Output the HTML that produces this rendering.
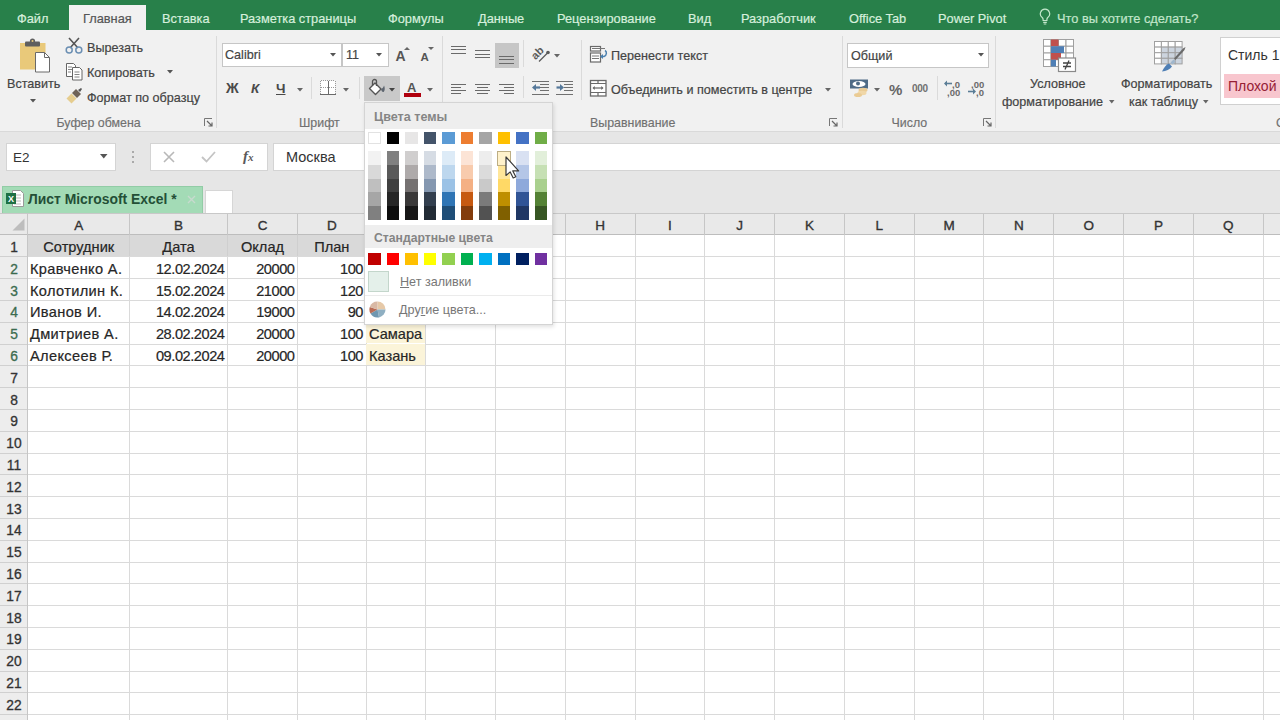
<!DOCTYPE html><html><head><meta charset="utf-8"><style>
*{margin:0;padding:0;box-sizing:border-box}
html,body{width:1280px;height:720px;overflow:hidden;background:#fff;font-family:"Liberation Sans", sans-serif;}
.a{position:absolute}
.t{position:absolute;white-space:nowrap;line-height:1}
.tab{font-size:12.8px;-webkit-text-stroke:0.2px currentColor}
.rb{color:#444444;font-size:12.6px;-webkit-text-stroke:0.2px #444444}
.gl{color:#707070;font-size:12.4px;-webkit-text-stroke:0.15px #707070}
.cell{color:#262626;font-size:14.6px;-webkit-text-stroke:0.2px #262626}
.rh{color:#333;font-size:13.8px;text-align:center;width:28px;left:0;-webkit-text-stroke:0.3px}
.ch{color:#333;font-size:13.5px;text-align:center;-webkit-text-stroke:0.35px #333}
</style></head><body>
<div class="a" style="left:0;top:0;width:1280px;height:30px;background:#28804A"></div>
<div class="a" style="left:69px;top:5px;width:77px;height:26px;background:#F1F1F1"></div>
<div class="t tab" style="left:17px;top:13px;color:#D6EFDC">Файл</div>
<div class="t tab" style="left:83px;top:13px;color:#555">Главная</div>
<div class="t tab" style="left:162px;top:13px;color:#D6EFDC">Вставка</div>
<div class="t tab" style="left:240px;top:13px;color:#D6EFDC">Разметка страницы</div>
<div class="t tab" style="left:388px;top:13px;color:#D6EFDC">Формулы</div>
<div class="t tab" style="left:478px;top:13px;color:#D6EFDC">Данные</div>
<div class="t tab" style="left:557px;top:13px;color:#D6EFDC">Рецензирование</div>
<div class="t tab" style="left:688px;top:13px;color:#D6EFDC">Вид</div>
<div class="t tab" style="left:741px;top:13px;color:#D6EFDC">Разработчик</div>
<div class="t tab" style="left:849px;top:13px;color:#D6EFDC">Office Tab</div>
<div class="t tab" style="left:938px;top:13px;color:#D6EFDC">Power Pivot</div>
<div class="t tab" style="left:1057px;top:13px;color:#C2E6CB">Что вы хотите сделать?</div>
<svg class="a" style="left:1039px;top:8px" width="12" height="17" viewBox="0 0 12 17"><path d="M6 1.2a4.6 4.6 0 0 0-2.8 8.3c.6.5.9 1.2.9 2v1h3.8v-1c0-.8.3-1.5.9-2A4.6 4.6 0 0 0 6 1.2z" fill="none" stroke="#C2E6CB" stroke-width="1.2"/><path d="M4.2 14.3h3.6M4.7 16h2.6" stroke="#C2E6CB" stroke-width="1.2"/></svg>
<div class="a" style="left:0;top:131px;width:1280px;height:82px;background:#E6E6E6"></div>
<div class="a" style="left:0;top:30px;width:1280px;height:101px;background:#F1F1F1"></div>
<div class="a" style="left:0;top:131px;width:1280px;height:1px;background:#D9D9D9"></div>
<div class="a" style="left:581px;top:40px;width:1px;height:60px;background:#DADADA"></div>
<div class="a" style="left:216px;top:36px;width:1px;height:92px;background:#DADADA"></div>
<div class="a" style="left:442px;top:36px;width:1px;height:92px;background:#DADADA"></div>
<div class="a" style="left:842px;top:36px;width:1px;height:92px;background:#DADADA"></div>
<div class="a" style="left:995px;top:36px;width:1px;height:92px;background:#DADADA"></div>
<svg class="a" style="left:18px;top:38px" width="34" height="35" viewBox="0 0 34 35"><rect x="2" y="5" width="25.5" height="26.5" fill="#E9C97A"/><rect x="7" y="3.5" width="15" height="5" rx="1" fill="#5F5F5F"/><circle cx="14.5" cy="3" r="2.6" fill="#5F5F5F"/><circle cx="14.5" cy="3" r="1" fill="#E9C97A"/><path d="M17.5 14.5h9l5 5v14.5h-14z" fill="#fff" stroke="#6A6A6A" stroke-width="1"/><path d="M26.5 14.5v5h5" fill="none" stroke="#6A6A6A" stroke-width="1"/></svg>
<div class="t rb" style="left:7px;top:78px">Вставить</div>
<svg class="a" style="left:30px;top:99px" width="7" height="4"><path d="M0 0h6l-3 3.5z" fill="#555"/></svg>
<svg class="a" style="left:65px;top:37px" width="18" height="17" viewBox="0 0 18 17"><path d="M4 1l9 10M14 1L5 11" stroke="#555" stroke-width="1.6"/><circle cx="4.2" cy="13" r="3" fill="none" stroke="#6B8FB3" stroke-width="1.5"/><circle cx="13.8" cy="13" r="3" fill="none" stroke="#6B8FB3" stroke-width="1.5"/></svg>
<div class="t rb" style="left:87px;top:42px">Вырезать</div>
<svg class="a" style="left:65px;top:62px" width="18" height="19" viewBox="0 0 18 19"><path d="M1.5 1.5h7l2 2v11h-9z" fill="#fff" stroke="#666" stroke-width="1"/><path d="M7.5 5.5h7l2.5 2.5v10h-9.5z" fill="#fff" stroke="#666" stroke-width="1"/><path d="M3 5h4M3 7.5h4M3 10h3M9.5 10h5M9.5 12.5h5M9.5 15h5" stroke="#777" stroke-width="0.9"/></svg>
<div class="t rb" style="left:87px;top:67px">Копировать</div>
<svg class="a" style="left:167px;top:70px" width="7" height="4"><path d="M0 0h6l-3 3.5z" fill="#555"/></svg>
<svg class="a" style="left:65px;top:87px" width="18" height="18" viewBox="0 0 18 18"><path d="M1.5 11.5l5-5 5 5-5 5z" fill="#E6CD8F"/><path d="M7 6l4-4 5 5-4 4z" fill="#6E6257"/><path d="M13 3l3-2 1 1-2 3z" fill="#555"/></svg>
<div class="t rb" style="left:87px;top:92px">Формат по образцу</div>
<div class="t gl" style="left:56.5px;top:117px">Буфер обмена</div>
<svg class="a" style="left:204px;top:118px" width="9" height="9" viewBox="0 0 9 9"><path d="M0.5 8V0.5H8" fill="none" stroke="#777" stroke-width="1"/><path d="M3 3l5 5M8 4.5V8H4.5" fill="none" stroke="#666" stroke-width="1.2"/></svg>
<div class="a" style="left:222px;top:43px;width:120px;height:24px;background:#fff;border:1px solid #C6C6C6"></div>
<div class="t rb" style="left:225px;top:49px;color:#444">Calibri</div>
<svg class="a" style="left:330px;top:53px" width="7" height="4"><path d="M0 0h6l-3 3.5z" fill="#555"/></svg>
<div class="a" style="left:342px;top:43px;width:47px;height:24px;background:#fff;border:1px solid #C6C6C6"></div>
<div class="t rb" style="left:346px;top:49px;color:#444">11</div>
<svg class="a" style="left:376px;top:53px" width="7" height="4"><path d="M0 0h6l-3 3.5z" fill="#555"/></svg>
<div class="t" style="left:395.5px;top:49px;font-size:14px;font-weight:bold;color:#555">A</div>
<svg class="a" style="left:404px;top:47px" width="6" height="3"><path d="M0 3h6L3 0z" fill="#666"/></svg>
<div class="t" style="left:420.5px;top:51.5px;font-size:11.5px;font-weight:bold;color:#555">A</div>
<svg class="a" style="left:428px;top:47px" width="6" height="3"><path d="M0 0h6L3 3z" fill="#666"/></svg>
<div class="t" style="left:226px;top:81px;font-size:14px;font-weight:bold;color:#4A4A4A">Ж</div>
<div class="t" style="left:251px;top:82px;font-size:13.5px;font-weight:bold;font-style:italic;color:#4A4A4A">К</div>
<div class="t" style="left:276px;top:82px;font-size:13.5px;font-weight:bold;color:#4A4A4A;text-decoration:underline">Ч</div>
<svg class="a" style="left:297px;top:88px" width="7" height="4"><path d="M0 0h6l-3 3.5z" fill="#666"/></svg>
<div class="a" style="left:311px;top:77px;width:1px;height:22px;background:#DADADA"></div>
<svg class="a" style="left:320px;top:80px" width="16" height="16" viewBox="0 0 16 16" shape-rendering="crispEdges"><rect x="1" y="1" width="14" height="13" fill="#fff"/><path d="M0.5 1v13M15.5 1v13M1 0.5h14M1 7.5h14" stroke="#9A9A9A" stroke-width="1" stroke-dasharray="1 1" fill="none"/><path d="M0 14.5h16M8 1v13" stroke="#6A6A6A" stroke-width="1"/></svg>
<svg class="a" style="left:343px;top:88px" width="7" height="4"><path d="M0 0h6l-3 3.5z" fill="#666"/></svg>
<div class="a" style="left:359px;top:77px;width:1px;height:22px;background:#DADADA"></div>
<div class="a" style="left:364px;top:76px;width:36px;height:25px;background:#C9C9C9"></div>
<svg class="a" style="left:367px;top:78px" width="20" height="18" viewBox="0 0 20 18"><path d="M2.5 10.5L8 5l6 6-5.5 5.5z" fill="#fff" stroke="#555" stroke-width="1.4" stroke-linejoin="round"/><path d="M5.5 7.5V3.5a2 2 0 0 1 4 0V8" fill="none" stroke="#555" stroke-width="1.3"/><path d="M14 11c1.5-.5 2.5-1.5 3-3.5 1 2 1 4.5 0 6-1 1.5-2.5 0-3-2.5z" fill="#5E6670"/></svg>
<svg class="a" style="left:389px;top:88px" width="7" height="4"><path d="M0 0h6l-3 3.5z" fill="#444"/></svg>
<div class="t" style="left:407px;top:81px;font-size:13px;font-weight:bold;color:#555">A</div>
<div class="a" style="left:404px;top:93px;width:17px;height:4px;background:#B0000E"></div>
<svg class="a" style="left:427px;top:88px" width="7" height="4"><path d="M0 0h6l-3 3.5z" fill="#666"/></svg>
<div class="t gl" style="left:299px;top:117px">Шрифт</div>
<svg class="a" style="left:430px;top:118px" width="9" height="9" viewBox="0 0 9 9"><path d="M0.5 8V0.5H8" fill="none" stroke="#777" stroke-width="1"/><path d="M3 3l5 5M8 4.5V8H4.5" fill="none" stroke="#666" stroke-width="1.2"/></svg>
<svg class="a" style="left:451px;top:46px" width="16" height="14" shape-rendering="crispEdges"><g fill="#6A6A6A"><rect x="0" y="0" width="15" height="1"/><rect x="0" y="3" width="15" height="1"/><rect x="0" y="7" width="15" height="1"/></g></svg>
<svg class="a" style="left:475px;top:50px" width="16" height="14" shape-rendering="crispEdges"><g fill="#6A6A6A"><rect x="0" y="0" width="15" height="1"/><rect x="0" y="4" width="15" height="1"/><rect x="0" y="7" width="15" height="1"/></g></svg>
<div class="a" style="left:495px;top:43px;width:24px;height:25px;background:#C6C6C6"></div>
<svg class="a" style="left:499px;top:56px" width="16" height="14" shape-rendering="crispEdges"><g fill="#6A6A6A"><rect x="0" y="0" width="15" height="1"/><rect x="0" y="3" width="15" height="1"/><rect x="0" y="7" width="15" height="1"/></g></svg>
<svg class="a" style="left:451px;top:84px" width="16" height="14" shape-rendering="crispEdges"><g fill="#6A6A6A"><rect x="0" y="0" width="15" height="1"/><rect x="0" y="3" width="10" height="1"/><rect x="0" y="6" width="15" height="1"/><rect x="0" y="9" width="10" height="1"/></g></svg>
<svg class="a" style="left:475px;top:84px" width="16" height="14" shape-rendering="crispEdges"><g fill="#6A6A6A"><rect x="0" y="0" width="15" height="1"/><rect x="2" y="3" width="11" height="1"/><rect x="0" y="6" width="15" height="1"/><rect x="2" y="9" width="11" height="1"/></g></svg>
<svg class="a" style="left:499px;top:84px" width="16" height="14" shape-rendering="crispEdges"><g fill="#6A6A6A"><rect x="0" y="0" width="15" height="1"/><rect x="5" y="3" width="10" height="1"/><rect x="0" y="6" width="15" height="1"/><rect x="5" y="9" width="10" height="1"/></g></svg>
<div class="a" style="left:523px;top:40px;width:1px;height:27px;background:#DADADA"></div>
<div class="a" style="left:523px;top:76px;width:1px;height:22px;background:#DADADA"></div>
<svg class="a" style="left:530px;top:43px" width="22" height="21" viewBox="0 0 22 21"><g transform="rotate(-45 8 9)"><text x="0.5" y="13" font-family="Liberation Sans" font-size="11" font-weight="bold" fill="#5A5A5A">ab</text></g><path d="M9 18.5L17.5 10" stroke="#5A5A5A" stroke-width="1.3"/><circle cx="18" cy="9.5" r="1.8" fill="#5A5A5A"/></svg>
<svg class="a" style="left:554px;top:54px" width="7" height="4"><path d="M0 0h6l-3 3.5z" fill="#666"/></svg>
<svg class="a" style="left:532px;top:80px" width="18" height="16" viewBox="0 0 18 16" shape-rendering="crispEdges"><g fill="#707070"><rect x="0" y="1" width="17" height="1"/><rect x="8" y="4" width="9" height="1"/><rect x="8" y="7" width="9" height="1"/><rect x="8" y="10" width="9" height="1"/><rect x="0" y="14" width="17" height="1"/></g></svg>
<svg class="a" style="left:532px;top:80px" width="9" height="16" viewBox="0 0 9 16"><path d="M3 7.5h5" stroke="#55789A" stroke-width="2.2"/><path d="M0 7.5l4-3.5v7z" fill="#55789A"/></svg>
<svg class="a" style="left:556px;top:80px" width="18" height="16" viewBox="0 0 18 16" shape-rendering="crispEdges"><g fill="#707070"><rect x="0" y="1" width="17" height="1"/><rect x="8" y="4" width="9" height="1"/><rect x="8" y="7" width="9" height="1"/><rect x="8" y="10" width="9" height="1"/><rect x="0" y="14" width="17" height="1"/></g></svg>
<svg class="a" style="left:556px;top:80px" width="9" height="16" viewBox="0 0 9 16"><path d="M0.5 7.5h4.5" stroke="#55789A" stroke-width="2.2"/><path d="M8 7.5l-4-3.5v7z" fill="#55789A"/></svg>
<svg class="a" style="left:589px;top:45px" width="20" height="19" viewBox="0 0 20 19"><rect x="1.5" y="1.5" width="10" height="4.5" fill="#fff" stroke="#6A6A6A" stroke-width="1.2"/><path d="M3 3.5h13" stroke="#777" stroke-width="1"/><rect x="1.5" y="8" width="10" height="9" fill="#fff" stroke="#6A6A6A" stroke-width="1.2"/><path d="M3 11h7M3 13.5h7" stroke="#777" stroke-width="1"/><path d="M16 5.5c2 1 2 5-1 6h-3" fill="none" stroke="#4A7FAE" stroke-width="1.5"/><path d="M11 11.5l3-2.5v5z" fill="#4A7FAE"/></svg>
<div class="t rb" style="left:611px;top:50px">Перенести текст</div>
<svg class="a" style="left:589px;top:79px" width="18" height="18" viewBox="0 0 18 18"><rect x="1.5" y="1.5" width="15.5" height="15.5" fill="#fff" stroke="#6A6A6A" stroke-width="1.3"/><path d="M1.5 4.5h15.5M1.5 13.5h15.5M9 1.5v3M9 13.5v3.5" stroke="#6A6A6A" stroke-width="1.2"/><path d="M4.5 9h9" stroke="#666" stroke-width="1.2"/><path d="M3.5 9l2.2-2v4zM14.5 9l-2.2-2v4z" fill="#666"/></svg>
<div class="t rb" style="left:611px;top:84px">Объединить и поместить в центре</div>
<svg class="a" style="left:825px;top:88px" width="7" height="4"><path d="M0 0h6l-3 3.5z" fill="#666"/></svg>
<div class="t gl" style="left:590px;top:117px">Выравнивание</div>
<svg class="a" style="left:829px;top:118px" width="9" height="9" viewBox="0 0 9 9"><path d="M0.5 8V0.5H8" fill="none" stroke="#777" stroke-width="1"/><path d="M3 3l5 5M8 4.5V8H4.5" fill="none" stroke="#666" stroke-width="1.2"/></svg>
<div class="a" style="left:847px;top:43px;width:142px;height:25px;background:#fff;border:1px solid #C6C6C6"></div>
<div class="t rb" style="left:851px;top:50px">Общий</div>
<svg class="a" style="left:978px;top:53px" width="7" height="4"><path d="M0 0h6l-3 3.5z" fill="#555"/></svg>
<svg class="a" style="left:850px;top:79px" width="20" height="19" viewBox="0 0 20 19"><rect x="0" y="0.5" width="18" height="9" fill="#4F6B86"/><ellipse cx="9" cy="5" rx="6.5" ry="3" fill="#fff"/><circle cx="8" cy="4.5" r="2" fill="#4F6B86"/><ellipse cx="13" cy="11" rx="4.5" ry="2.2" fill="#EACB94"/><ellipse cx="12" cy="14" rx="4.5" ry="2.2" fill="#F0D7A8"/><ellipse cx="8" cy="16" rx="4" ry="2" fill="#EACB94"/></svg>
<svg class="a" style="left:874px;top:88px" width="7" height="4"><path d="M0 0h6l-3 3.5z" fill="#666"/></svg>
<div class="t" style="left:889px;top:82px;font-size:15px;font-weight:bold;color:#666">%</div>
<div class="t" style="left:912px;top:84px;font-size:10px;font-weight:bold;color:#707070;letter-spacing:-0.3px">000</div>
<div class="a" style="left:937px;top:76px;width:1px;height:24px;background:#DADADA"></div>
<div class="t" style="left:952px;top:80px;font-size:9.5px;font-weight:bold;color:#6A6A6A">,0</div>
<div class="t" style="left:947px;top:88px;font-size:9.5px;font-weight:bold;color:#6A6A6A">,00</div>
<svg class="a" style="left:944px;top:80px" width="8" height="7"><path d="M1 3.5h7" stroke="#5A7D96" stroke-width="1.6"/><path d="M0 3.5l3-3v6z" fill="#5A7D96"/></svg>
<div class="t" style="left:971px;top:80px;font-size:9.5px;font-weight:bold;color:#6A6A6A">,00</div>
<div class="t" style="left:976px;top:88px;font-size:9.5px;font-weight:bold;color:#6A6A6A">,0</div>
<svg class="a" style="left:968px;top:88px" width="8" height="7"><path d="M0 3.5h6" stroke="#5A7D96" stroke-width="1.6"/><path d="M8 3.5l-3-3v6z" fill="#5A7D96"/></svg>
<div class="t gl" style="left:891.5px;top:117px">Число</div>
<svg class="a" style="left:983px;top:118px" width="9" height="9" viewBox="0 0 9 9"><path d="M0.5 8V0.5H8" fill="none" stroke="#777" stroke-width="1"/><path d="M3 3l5 5M8 4.5V8H4.5" fill="none" stroke="#666" stroke-width="1.2"/></svg>
<svg class="a" style="left:1042px;top:38px" width="36" height="36" viewBox="0 0 36 36"><g fill="#fff" stroke="#A0A0A0" stroke-width="1"><rect x="1.5" y="1.5" width="7.5" height="6.75"/><rect x="9.0" y="1.5" width="7.5" height="6.75"/><rect x="16.5" y="1.5" width="7.5" height="6.75"/><rect x="24.0" y="1.5" width="7.5" height="6.75"/><rect x="1.5" y="8.25" width="7.5" height="6.75"/><rect x="9.0" y="8.25" width="7.5" height="6.75"/><rect x="16.5" y="8.25" width="7.5" height="6.75"/><rect x="24.0" y="8.25" width="7.5" height="6.75"/><rect x="1.5" y="15.0" width="7.5" height="6.75"/><rect x="9.0" y="15.0" width="7.5" height="6.75"/><rect x="16.5" y="15.0" width="7.5" height="6.75"/><rect x="24.0" y="15.0" width="7.5" height="6.75"/><rect x="1.5" y="21.75" width="7.5" height="6.75"/><rect x="9.0" y="21.75" width="7.5" height="6.75"/><rect x="16.5" y="21.75" width="7.5" height="6.75"/><rect x="24.0" y="21.75" width="7.5" height="6.75"/></g><rect x="9" y="1.5" width="7.5" height="6.75" fill="#C0504D"/><rect x="9" y="8.25" width="13" height="6.75" fill="#4F7FB5"/><rect x="9" y="15" width="10" height="6.75" fill="#C0504D"/><rect x="9" y="21.75" width="5" height="6.75" fill="#4F7FB5"/><rect x="16.5" y="20" width="17" height="13.5" fill="#fff" stroke="#8A8A8A" stroke-width="1.2"/><path d="M21 25h8M21 28.5h8M27 22.5l-4 9" stroke="#444" stroke-width="1.3"/></svg>
<div class="t rb" style="left:1030px;top:78px">Условное</div>
<div class="t rb" style="left:1002px;top:96px">форматирование</div>
<svg class="a" style="left:1109px;top:100px" width="6" height="4"><path d="M0 0h5.5l-2.75 3.5z" fill="#666"/></svg>
<svg class="a" style="left:1153px;top:40px" width="36" height="34" viewBox="0 0 36 34"><g fill="#fff" stroke="#A0A0A0" stroke-width="1"><rect x="1.5" y="1.5" width="6.9" height="5.6" fill="#fff"/><rect x="8.4" y="1.5" width="6.9" height="5.6" fill="#fff"/><rect x="15.3" y="1.5" width="6.9" height="5.6" fill="#fff"/><rect x="22.200000000000003" y="1.5" width="6.9" height="5.6" fill="#fff"/><rect x="1.5" y="7.1" width="6.9" height="5.6" fill="#fff"/><rect x="8.4" y="7.1" width="6.9" height="5.6" fill="#CCD4DE"/><rect x="15.3" y="7.1" width="6.9" height="5.6" fill="#CCD4DE"/><rect x="22.200000000000003" y="7.1" width="6.9" height="5.6" fill="#CCD4DE"/><rect x="1.5" y="12.7" width="6.9" height="5.6" fill="#fff"/><rect x="8.4" y="12.7" width="6.9" height="5.6" fill="#CCD4DE"/><rect x="15.3" y="12.7" width="6.9" height="5.6" fill="#CCD4DE"/><rect x="22.200000000000003" y="12.7" width="6.9" height="5.6" fill="#CCD4DE"/><rect x="1.5" y="18.299999999999997" width="6.9" height="5.6" fill="#fff"/><rect x="8.4" y="18.299999999999997" width="6.9" height="5.6" fill="#CCD4DE"/><rect x="15.3" y="18.299999999999997" width="6.9" height="5.6" fill="#CCD4DE"/><rect x="22.200000000000003" y="18.299999999999997" width="6.9" height="5.6" fill="#CCD4DE"/></g><path d="M9 31.5c2-4 4-7 7-8l3 3c-2 3-6 4.5-10 5z" fill="#4F7FB5"/><path d="M17.5 22.5l2 2 3-3-2-2z" fill="#9FB6CC"/><path d="M21 18.5l9-10 2.5-1.5-1 3-9 10z" fill="#6A6A6A"/></svg>
<div class="t rb" style="left:1121px;top:78px">Форматировать</div>
<div class="t rb" style="left:1129px;top:96px">как таблицу</div>
<svg class="a" style="left:1203px;top:100px" width="6" height="4"><path d="M0 0h5.5l-2.75 3.5z" fill="#666"/></svg>
<div class="a" style="left:1220px;top:37px;width:70px;height:68px;background:#fff;border:1px solid #D0D0D0"></div>
<div class="t" style="left:1228px;top:48px;font-size:14px;color:#333">Стиль 1</div>
<div class="a" style="left:1224px;top:74px;width:60px;height:24px;background:#F8C6CE"></div>
<div class="t" style="left:1228px;top:79px;font-size:14px;color:#962035">Плохой</div>
<div class="t gl" style="left:1276px;top:117px">Стили</div>
<div class="a" style="left:6px;top:143px;width:110px;height:28px;background:#fff;border:1px solid #D4D4D4"></div>
<div class="t" style="left:13px;top:151px;font-size:13.5px;color:#333">E2</div>
<svg class="a" style="left:100px;top:154px" width="8" height="5"><path d="M0 0h7.5l-3.75 4.5z" fill="#555"/></svg>
<div class="a" style="left:132px;top:151px;width:2px;height:2px;background:#AAA"></div>
<div class="a" style="left:132px;top:156px;width:2px;height:2px;background:#AAA"></div>
<div class="a" style="left:132px;top:161px;width:2px;height:2px;background:#AAA"></div>
<div class="a" style="left:150px;top:143px;width:118px;height:28px;background:#fff;border:1px solid #D4D4D4"></div>
<svg class="a" style="left:163px;top:151px" width="12" height="12"><path d="M1 1l10 10M11 1L1 11" stroke="#B8B8B8" stroke-width="1.6"/></svg>
<svg class="a" style="left:201px;top:151px" width="15" height="12"><path d="M1 6l4.5 4.5L14 1" fill="none" stroke="#C4C4C4" stroke-width="1.8"/></svg>
<div class="t" style="left:243px;top:149px;font-size:15px;font-style:italic;font-weight:bold;font-family:'Liberation Serif';color:#5A5A5A">f<span style="font-size:11px">x</span></div>
<div class="a" style="left:273px;top:143px;width:1010px;height:28px;background:#fff;border:1px solid #D4D4D4"></div>
<div class="t" style="left:286px;top:150px;font-size:14.5px;color:#333">Москва</div>
<div class="a" style="left:2px;top:186px;width:201px;height:28px;background:#A3DBB6;border:1px solid #92CCA6"></div>
<svg class="a" style="left:6px;top:190px" width="18" height="17" viewBox="0 0 18 17"><path d="M6.5 0.5h8l3 3v13h-11z" fill="#fff" stroke="#999"/><path d="M8 5h7M8 8h7M8 11h7M8 14h7" stroke="#BBB"/><rect x="0" y="3" width="10" height="11" fill="#1E7145"/><text x="2" y="12" font-family="Liberation Sans" font-size="9" font-weight="bold" fill="#fff">X</text></svg>
<div class="t" style="left:28px;top:193px;font-size:13.9px;font-weight:bold;color:#234F36">Лист Microsoft Excel *</div>
<svg class="a" style="left:187px;top:195px" width="9" height="9"><path d="M1 1l7 7M8 1L1 8" stroke="#C7DACE" stroke-width="1.4"/></svg>
<div class="a" style="left:205px;top:190px;width:28px;height:24px;background:#fff;border:1px solid #D6D6D6;border-bottom:none"></div>
<div class="a" style="left:0;top:213px;width:1280px;height:22px;background:#E9E9E9"></div>
<div class="a" style="left:0;top:213px;width:1280px;height:1px;background:#C8C8C8"></div>
<div class="a" style="left:0;top:234px;width:1280px;height:1px;background:#BDBDBD"></div>
<svg class="a" style="left:12px;top:218px" width="13" height="13"><path d="M12.5 0.5v12h-12z" fill="#BDBDBD"/></svg>
<div class="a" style="left:129px;top:214px;width:1px;height:21px;background:#C6C6C6"></div>
<div class="t ch" style="left:28px;width:101.5px;top:218.5px">A</div>
<div class="a" style="left:227px;top:214px;width:1px;height:21px;background:#C6C6C6"></div>
<div class="t ch" style="left:129.5px;width:98.0px;top:218.5px">B</div>
<div class="a" style="left:297px;top:214px;width:1px;height:21px;background:#C6C6C6"></div>
<div class="t ch" style="left:227.5px;width:70.0px;top:218.5px">C</div>
<div class="a" style="left:366px;top:214px;width:1px;height:21px;background:#C6C6C6"></div>
<div class="t ch" style="left:297.5px;width:68.5px;top:218.5px">D</div>
<div class="a" style="left:425px;top:214px;width:1px;height:21px;background:#C6C6C6"></div>
<div class="t ch" style="left:366px;width:59.5px;top:218.5px">E</div>
<div class="a" style="left:495px;top:214px;width:1px;height:21px;background:#C6C6C6"></div>
<div class="t ch" style="left:425.5px;width:70.0px;top:218.5px">F</div>
<div class="a" style="left:565px;top:214px;width:1px;height:21px;background:#C6C6C6"></div>
<div class="t ch" style="left:495.5px;width:69.79999999999995px;top:218.5px">G</div>
<div class="a" style="left:635px;top:214px;width:1px;height:21px;background:#C6C6C6"></div>
<div class="t ch" style="left:565.3px;width:69.70000000000005px;top:218.5px">H</div>
<div class="a" style="left:704px;top:214px;width:1px;height:21px;background:#C6C6C6"></div>
<div class="t ch" style="left:635px;width:69.60000000000002px;top:218.5px">I</div>
<div class="a" style="left:774px;top:214px;width:1px;height:21px;background:#C6C6C6"></div>
<div class="t ch" style="left:704.6px;width:69.89999999999998px;top:218.5px">J</div>
<div class="a" style="left:844px;top:214px;width:1px;height:21px;background:#C6C6C6"></div>
<div class="t ch" style="left:774.5px;width:69.89999999999998px;top:218.5px">K</div>
<div class="a" style="left:914px;top:214px;width:1px;height:21px;background:#C6C6C6"></div>
<div class="t ch" style="left:844.4px;width:69.80000000000007px;top:218.5px">L</div>
<div class="a" style="left:983px;top:214px;width:1px;height:21px;background:#C6C6C6"></div>
<div class="t ch" style="left:914.2px;width:69.69999999999993px;top:218.5px">M</div>
<div class="a" style="left:1053px;top:214px;width:1px;height:21px;background:#C6C6C6"></div>
<div class="t ch" style="left:983.9px;width:69.80000000000007px;top:218.5px">N</div>
<div class="a" style="left:1123px;top:214px;width:1px;height:21px;background:#C6C6C6"></div>
<div class="t ch" style="left:1053.7px;width:69.89999999999986px;top:218.5px">O</div>
<div class="a" style="left:1193px;top:214px;width:1px;height:21px;background:#C6C6C6"></div>
<div class="t ch" style="left:1123.6px;width:69.80000000000018px;top:218.5px">P</div>
<div class="a" style="left:1263px;top:214px;width:1px;height:21px;background:#C6C6C6"></div>
<div class="t ch" style="left:1193.4px;width:69.79999999999995px;top:218.5px">Q</div>
<div class="a" style="left:1333px;top:214px;width:1px;height:21px;background:#C6C6C6"></div>
<div class="t ch" style="left:1263.2px;width:69.79999999999995px;top:218.5px">R</div>
<div class="a" style="left:0;top:235px;width:28px;height:485px;background:#EDEDED"></div>
<div class="a" style="left:27px;top:213px;width:1px;height:507px;background:#C6C6C6"></div>
<div class="a" style="left:0;top:256px;width:27px;height:1px;background:#D0D0D0"></div>
<div class="a" style="left:28px;top:256px;width:1252px;height:1px;background:#DADADA"></div>
<div class="t rh" style="top:241.0px;color:#333">1</div>
<div class="a" style="left:0;top:278px;width:27px;height:1px;background:#D0D0D0"></div>
<div class="a" style="left:28px;top:278px;width:1252px;height:1px;background:#DADADA"></div>
<div class="t rh" style="top:262.8px;color:#3B6B4F">2</div>
<div class="a" style="left:0;top:300px;width:27px;height:1px;background:#D0D0D0"></div>
<div class="a" style="left:28px;top:300px;width:1252px;height:1px;background:#DADADA"></div>
<div class="t rh" style="top:284.6px;color:#3B6B4F">3</div>
<div class="a" style="left:0;top:322px;width:27px;height:1px;background:#D0D0D0"></div>
<div class="a" style="left:28px;top:322px;width:1252px;height:1px;background:#DADADA"></div>
<div class="t rh" style="top:306.4px;color:#3B6B4F">4</div>
<div class="a" style="left:0;top:344px;width:27px;height:1px;background:#D0D0D0"></div>
<div class="a" style="left:28px;top:344px;width:1252px;height:1px;background:#DADADA"></div>
<div class="t rh" style="top:328.2px;color:#3B6B4F">5</div>
<div class="a" style="left:0;top:365px;width:27px;height:1px;background:#D0D0D0"></div>
<div class="a" style="left:28px;top:365px;width:1252px;height:1px;background:#DADADA"></div>
<div class="t rh" style="top:350.0px;color:#3B6B4F">6</div>
<div class="a" style="left:0;top:387px;width:27px;height:1px;background:#D0D0D0"></div>
<div class="a" style="left:28px;top:387px;width:1252px;height:1px;background:#DADADA"></div>
<div class="t rh" style="top:371.8px;color:#333">7</div>
<div class="a" style="left:0;top:409px;width:27px;height:1px;background:#D0D0D0"></div>
<div class="a" style="left:28px;top:409px;width:1252px;height:1px;background:#DADADA"></div>
<div class="t rh" style="top:393.6px;color:#333">8</div>
<div class="a" style="left:0;top:431px;width:27px;height:1px;background:#D0D0D0"></div>
<div class="a" style="left:28px;top:431px;width:1252px;height:1px;background:#DADADA"></div>
<div class="t rh" style="top:415.4px;color:#333">9</div>
<div class="a" style="left:0;top:453px;width:27px;height:1px;background:#D0D0D0"></div>
<div class="a" style="left:28px;top:453px;width:1252px;height:1px;background:#DADADA"></div>
<div class="t rh" style="top:437.20000000000005px;color:#333">10</div>
<div class="a" style="left:0;top:474px;width:27px;height:1px;background:#D0D0D0"></div>
<div class="a" style="left:28px;top:474px;width:1252px;height:1px;background:#DADADA"></div>
<div class="t rh" style="top:459.0px;color:#333">11</div>
<div class="a" style="left:0;top:496px;width:27px;height:1px;background:#D0D0D0"></div>
<div class="a" style="left:28px;top:496px;width:1252px;height:1px;background:#DADADA"></div>
<div class="t rh" style="top:480.8px;color:#333">12</div>
<div class="a" style="left:0;top:518px;width:27px;height:1px;background:#D0D0D0"></div>
<div class="a" style="left:28px;top:518px;width:1252px;height:1px;background:#DADADA"></div>
<div class="t rh" style="top:502.6px;color:#333">13</div>
<div class="a" style="left:0;top:540px;width:27px;height:1px;background:#D0D0D0"></div>
<div class="a" style="left:28px;top:540px;width:1252px;height:1px;background:#DADADA"></div>
<div class="t rh" style="top:524.4000000000001px;color:#333">14</div>
<div class="a" style="left:0;top:562px;width:27px;height:1px;background:#D0D0D0"></div>
<div class="a" style="left:28px;top:562px;width:1252px;height:1px;background:#DADADA"></div>
<div class="t rh" style="top:546.2px;color:#333">15</div>
<div class="a" style="left:0;top:583px;width:27px;height:1px;background:#D0D0D0"></div>
<div class="a" style="left:28px;top:583px;width:1252px;height:1px;background:#DADADA"></div>
<div class="t rh" style="top:568.0px;color:#333">16</div>
<div class="a" style="left:0;top:605px;width:27px;height:1px;background:#D0D0D0"></div>
<div class="a" style="left:28px;top:605px;width:1252px;height:1px;background:#DADADA"></div>
<div class="t rh" style="top:589.8px;color:#333">17</div>
<div class="a" style="left:0;top:627px;width:27px;height:1px;background:#D0D0D0"></div>
<div class="a" style="left:28px;top:627px;width:1252px;height:1px;background:#DADADA"></div>
<div class="t rh" style="top:611.6px;color:#333">18</div>
<div class="a" style="left:0;top:649px;width:27px;height:1px;background:#D0D0D0"></div>
<div class="a" style="left:28px;top:649px;width:1252px;height:1px;background:#DADADA"></div>
<div class="t rh" style="top:633.4000000000001px;color:#333">19</div>
<div class="a" style="left:0;top:671px;width:27px;height:1px;background:#D0D0D0"></div>
<div class="a" style="left:28px;top:671px;width:1252px;height:1px;background:#DADADA"></div>
<div class="t rh" style="top:655.2px;color:#333">20</div>
<div class="a" style="left:0;top:692px;width:27px;height:1px;background:#D0D0D0"></div>
<div class="a" style="left:28px;top:692px;width:1252px;height:1px;background:#DADADA"></div>
<div class="t rh" style="top:677.0px;color:#333">21</div>
<div class="a" style="left:0;top:714px;width:27px;height:1px;background:#D0D0D0"></div>
<div class="a" style="left:28px;top:714px;width:1252px;height:1px;background:#DADADA"></div>
<div class="t rh" style="top:698.8px;color:#333">22</div>
<div class="a" style="left:0;top:736px;width:27px;height:1px;background:#D0D0D0"></div>
<div class="a" style="left:28px;top:736px;width:1252px;height:1px;background:#DADADA"></div>
<div class="t rh" style="top:720.6px;color:#333">23</div>
<div class="a" style="left:129px;top:235px;width:1px;height:485px;background:#DADADA"></div>
<div class="a" style="left:227px;top:235px;width:1px;height:485px;background:#DADADA"></div>
<div class="a" style="left:297px;top:235px;width:1px;height:485px;background:#DADADA"></div>
<div class="a" style="left:366px;top:235px;width:1px;height:485px;background:#DADADA"></div>
<div class="a" style="left:425px;top:235px;width:1px;height:485px;background:#DADADA"></div>
<div class="a" style="left:495px;top:235px;width:1px;height:485px;background:#DADADA"></div>
<div class="a" style="left:565px;top:235px;width:1px;height:485px;background:#DADADA"></div>
<div class="a" style="left:635px;top:235px;width:1px;height:485px;background:#DADADA"></div>
<div class="a" style="left:704px;top:235px;width:1px;height:485px;background:#DADADA"></div>
<div class="a" style="left:774px;top:235px;width:1px;height:485px;background:#DADADA"></div>
<div class="a" style="left:844px;top:235px;width:1px;height:485px;background:#DADADA"></div>
<div class="a" style="left:914px;top:235px;width:1px;height:485px;background:#DADADA"></div>
<div class="a" style="left:983px;top:235px;width:1px;height:485px;background:#DADADA"></div>
<div class="a" style="left:1053px;top:235px;width:1px;height:485px;background:#DADADA"></div>
<div class="a" style="left:1123px;top:235px;width:1px;height:485px;background:#DADADA"></div>
<div class="a" style="left:1193px;top:235px;width:1px;height:485px;background:#DADADA"></div>
<div class="a" style="left:1263px;top:235px;width:1px;height:485px;background:#DADADA"></div>
<div class="a" style="left:1333px;top:235px;width:1px;height:485px;background:#DADADA"></div>
<div class="a" style="left:28px;top:235px;width:337px;height:21px;background:#D9D9D9"></div>
<div class="a" style="left:129px;top:235px;width:1px;height:21px;background:#CFCFCF"></div>
<div class="a" style="left:227px;top:235px;width:1px;height:21px;background:#CFCFCF"></div>
<div class="a" style="left:297px;top:235px;width:1px;height:21px;background:#CFCFCF"></div>
<div class="a" style="left:366px;top:235px;width:1px;height:21px;background:#CFCFCF"></div>
<div class="t cell" style="left:28px;width:101.5px;text-align:center;top:240px">Сотрудник</div>
<div class="t cell" style="left:129.5px;width:98.0px;text-align:center;top:240px">Дата</div>
<div class="t cell" style="left:227.5px;width:70.0px;text-align:center;top:240px">Оклад</div>
<div class="t cell" style="left:297.5px;width:68.5px;text-align:center;top:240px">План</div>
<div class="a" style="left:366px;top:322px;width:59px;height:21px;background:#FBF4D9"></div>
<div class="a" style="left:366px;top:344px;width:59px;height:21px;background:#FBF4D9"></div>
<div class="t cell" style="left:30px;top:261.8px;letter-spacing:0.35px">Кравченко А.</div>
<div class="t cell" style="left:129.5px;width:95.0px;text-align:right;top:261.8px;letter-spacing:-0.45px">12.02.2024</div>
<div class="t cell" style="left:227.5px;width:67.0px;text-align:right;top:261.8px;letter-spacing:-0.45px">20000</div>
<div class="t cell" style="left:297.5px;width:65.5px;text-align:right;top:261.8px;letter-spacing:-0.45px">100</div>
<div class="t cell" style="left:369px;top:261.8px">Москва</div>
<div class="t cell" style="left:30px;top:283.6px;letter-spacing:0.35px">Колотилин К.</div>
<div class="t cell" style="left:129.5px;width:95.0px;text-align:right;top:283.6px;letter-spacing:-0.45px">15.02.2024</div>
<div class="t cell" style="left:227.5px;width:67.0px;text-align:right;top:283.6px;letter-spacing:-0.45px">21000</div>
<div class="t cell" style="left:297.5px;width:65.5px;text-align:right;top:283.6px;letter-spacing:-0.45px">120</div>
<div class="t cell" style="left:30px;top:305.4px;letter-spacing:0.35px">Иванов И.</div>
<div class="t cell" style="left:129.5px;width:95.0px;text-align:right;top:305.4px;letter-spacing:-0.45px">14.02.2024</div>
<div class="t cell" style="left:227.5px;width:67.0px;text-align:right;top:305.4px;letter-spacing:-0.45px">19000</div>
<div class="t cell" style="left:297.5px;width:65.5px;text-align:right;top:305.4px;letter-spacing:-0.45px">90</div>
<div class="t cell" style="left:30px;top:327.2px;letter-spacing:0.35px">Дмитриев А.</div>
<div class="t cell" style="left:129.5px;width:95.0px;text-align:right;top:327.2px;letter-spacing:-0.45px">28.02.2024</div>
<div class="t cell" style="left:227.5px;width:67.0px;text-align:right;top:327.2px;letter-spacing:-0.45px">20000</div>
<div class="t cell" style="left:297.5px;width:65.5px;text-align:right;top:327.2px;letter-spacing:-0.45px">100</div>
<div class="t cell" style="left:369px;top:327.2px">Самара</div>
<div class="t cell" style="left:30px;top:349.0px;letter-spacing:0.35px">Алексеев Р.</div>
<div class="t cell" style="left:129.5px;width:95.0px;text-align:right;top:349.0px;letter-spacing:-0.45px">09.02.2024</div>
<div class="t cell" style="left:227.5px;width:67.0px;text-align:right;top:349.0px;letter-spacing:-0.45px">20000</div>
<div class="t cell" style="left:297.5px;width:65.5px;text-align:right;top:349.0px;letter-spacing:-0.45px">100</div>
<div class="t cell" style="left:369px;top:349.0px">Казань</div>
<div class="a" style="left:364px;top:102px;width:189px;height:223px;box-shadow:1px 2px 4px rgba(0,0,0,0.12)"></div>
<div class="a" style="left:364px;top:102px;width:189px;height:223px;background:#fff;border:1px solid #D4D4D4"></div>
<div class="a" style="left:365px;top:103px;width:187px;height:26px;background:#EEEEEE"></div>
<div class="t" style="left:374px;top:111px;font-size:12.6px;font-weight:bold;color:#858585">Цвета темы</div>
<div class="a" style="left:368.3px;top:132px;width:12.5px;height:12px;background:#FFFFFF;border:1px solid #E2E2E2;"></div>
<div class="a" style="left:368.3px;top:151.0px;width:12.5px;height:13.9px;background:#F2F2F2"></div>
<div class="a" style="left:368.3px;top:164.8px;width:12.5px;height:13.9px;background:#D9D9D9"></div>
<div class="a" style="left:368.3px;top:178.6px;width:12.5px;height:13.9px;background:#BFBFBF"></div>
<div class="a" style="left:368.3px;top:192.4px;width:12.5px;height:13.9px;background:#A6A6A6"></div>
<div class="a" style="left:368.3px;top:206.2px;width:12.5px;height:13.9px;background:#808080"></div>
<div class="a" style="left:386.82px;top:132px;width:12.5px;height:12px;background:#000000;"></div>
<div class="a" style="left:386.82px;top:151.0px;width:12.5px;height:13.9px;background:#808080"></div>
<div class="a" style="left:386.82px;top:164.8px;width:12.5px;height:13.9px;background:#595959"></div>
<div class="a" style="left:386.82px;top:178.6px;width:12.5px;height:13.9px;background:#404040"></div>
<div class="a" style="left:386.82px;top:192.4px;width:12.5px;height:13.9px;background:#262626"></div>
<div class="a" style="left:386.82px;top:206.2px;width:12.5px;height:13.9px;background:#0D0D0D"></div>
<div class="a" style="left:405.34000000000003px;top:132px;width:12.5px;height:12px;background:#E7E6E6;"></div>
<div class="a" style="left:405.34000000000003px;top:151.0px;width:12.5px;height:13.9px;background:#D0CECE"></div>
<div class="a" style="left:405.34000000000003px;top:164.8px;width:12.5px;height:13.9px;background:#AEAAAA"></div>
<div class="a" style="left:405.34000000000003px;top:178.6px;width:12.5px;height:13.9px;background:#757171"></div>
<div class="a" style="left:405.34000000000003px;top:192.4px;width:12.5px;height:13.9px;background:#3A3838"></div>
<div class="a" style="left:405.34000000000003px;top:206.2px;width:12.5px;height:13.9px;background:#171616"></div>
<div class="a" style="left:423.86px;top:132px;width:12.5px;height:12px;background:#44546A;"></div>
<div class="a" style="left:423.86px;top:151.0px;width:12.5px;height:13.9px;background:#D6DCE4"></div>
<div class="a" style="left:423.86px;top:164.8px;width:12.5px;height:13.9px;background:#ADB9CA"></div>
<div class="a" style="left:423.86px;top:178.6px;width:12.5px;height:13.9px;background:#8497B0"></div>
<div class="a" style="left:423.86px;top:192.4px;width:12.5px;height:13.9px;background:#333F4F"></div>
<div class="a" style="left:423.86px;top:206.2px;width:12.5px;height:13.9px;background:#222B35"></div>
<div class="a" style="left:442.38px;top:132px;width:12.5px;height:12px;background:#5B9BD5;"></div>
<div class="a" style="left:442.38px;top:151.0px;width:12.5px;height:13.9px;background:#DDEBF7"></div>
<div class="a" style="left:442.38px;top:164.8px;width:12.5px;height:13.9px;background:#BDD7EE"></div>
<div class="a" style="left:442.38px;top:178.6px;width:12.5px;height:13.9px;background:#9BC2E6"></div>
<div class="a" style="left:442.38px;top:192.4px;width:12.5px;height:13.9px;background:#2F75B5"></div>
<div class="a" style="left:442.38px;top:206.2px;width:12.5px;height:13.9px;background:#1F4E78"></div>
<div class="a" style="left:460.9px;top:132px;width:12.5px;height:12px;background:#ED7D31;"></div>
<div class="a" style="left:460.9px;top:151.0px;width:12.5px;height:13.9px;background:#FCE4D6"></div>
<div class="a" style="left:460.9px;top:164.8px;width:12.5px;height:13.9px;background:#F8CBAD"></div>
<div class="a" style="left:460.9px;top:178.6px;width:12.5px;height:13.9px;background:#F4B084"></div>
<div class="a" style="left:460.9px;top:192.4px;width:12.5px;height:13.9px;background:#C65911"></div>
<div class="a" style="left:460.9px;top:206.2px;width:12.5px;height:13.9px;background:#833C0C"></div>
<div class="a" style="left:479.42px;top:132px;width:12.5px;height:12px;background:#A5A5A5;"></div>
<div class="a" style="left:479.42px;top:151.0px;width:12.5px;height:13.9px;background:#EDEDED"></div>
<div class="a" style="left:479.42px;top:164.8px;width:12.5px;height:13.9px;background:#DBDBDB"></div>
<div class="a" style="left:479.42px;top:178.6px;width:12.5px;height:13.9px;background:#C9C9C9"></div>
<div class="a" style="left:479.42px;top:192.4px;width:12.5px;height:13.9px;background:#7B7B7B"></div>
<div class="a" style="left:479.42px;top:206.2px;width:12.5px;height:13.9px;background:#525252"></div>
<div class="a" style="left:497.94px;top:132px;width:12.5px;height:12px;background:#FFC000;"></div>
<div class="a" style="left:497.94px;top:151.0px;width:12.5px;height:13.9px;background:#FFF2CC"></div>
<div class="a" style="left:497.94px;top:164.8px;width:12.5px;height:13.9px;background:#FFE699"></div>
<div class="a" style="left:497.94px;top:178.6px;width:12.5px;height:13.9px;background:#FFD966"></div>
<div class="a" style="left:497.94px;top:192.4px;width:12.5px;height:13.9px;background:#BF8F00"></div>
<div class="a" style="left:497.94px;top:206.2px;width:12.5px;height:13.9px;background:#806000"></div>
<div class="a" style="left:516.46px;top:132px;width:12.5px;height:12px;background:#4472C4;"></div>
<div class="a" style="left:516.46px;top:151.0px;width:12.5px;height:13.9px;background:#D9E1F2"></div>
<div class="a" style="left:516.46px;top:164.8px;width:12.5px;height:13.9px;background:#B4C6E7"></div>
<div class="a" style="left:516.46px;top:178.6px;width:12.5px;height:13.9px;background:#8EA9DB"></div>
<div class="a" style="left:516.46px;top:192.4px;width:12.5px;height:13.9px;background:#305496"></div>
<div class="a" style="left:516.46px;top:206.2px;width:12.5px;height:13.9px;background:#203764"></div>
<div class="a" style="left:534.98px;top:132px;width:12.5px;height:12px;background:#70AD47;"></div>
<div class="a" style="left:534.98px;top:151.0px;width:12.5px;height:13.9px;background:#E2EFDA"></div>
<div class="a" style="left:534.98px;top:164.8px;width:12.5px;height:13.9px;background:#C6E0B4"></div>
<div class="a" style="left:534.98px;top:178.6px;width:12.5px;height:13.9px;background:#A9D08E"></div>
<div class="a" style="left:534.98px;top:192.4px;width:12.5px;height:13.9px;background:#548235"></div>
<div class="a" style="left:534.98px;top:206.2px;width:12.5px;height:13.9px;background:#375623"></div>
<div class="a" style="left:497.44px;top:150.5px;width:13.5px;height:15px;border:1px solid #BDAE84"></div>
<div class="a" style="left:365px;top:225px;width:187px;height:23px;background:#EEEEEE"></div>
<div class="t" style="left:374px;top:232px;font-size:12.2px;font-weight:bold;color:#858585">Стандартные цвета</div>
<div class="a" style="left:368.3px;top:253px;width:12.5px;height:12px;background:#C00000"></div>
<div class="a" style="left:386.82px;top:253px;width:12.5px;height:12px;background:#FF0000"></div>
<div class="a" style="left:405.34000000000003px;top:253px;width:12.5px;height:12px;background:#FFC000"></div>
<div class="a" style="left:423.86px;top:253px;width:12.5px;height:12px;background:#FFFF00"></div>
<div class="a" style="left:442.38px;top:253px;width:12.5px;height:12px;background:#92D050"></div>
<div class="a" style="left:460.9px;top:253px;width:12.5px;height:12px;background:#00B050"></div>
<div class="a" style="left:479.42px;top:253px;width:12.5px;height:12px;background:#00B0F0"></div>
<div class="a" style="left:497.94px;top:253px;width:12.5px;height:12px;background:#0070C0"></div>
<div class="a" style="left:516.46px;top:253px;width:12.5px;height:12px;background:#002060"></div>
<div class="a" style="left:534.98px;top:253px;width:12.5px;height:12px;background:#7030A0"></div>
<div class="a" style="left:368px;top:271px;width:21px;height:21px;background:#E4F0EA;border:1px solid #C3D6CB"></div>
<div class="t" style="left:400px;top:276px;font-size:12.6px;color:#777"><u>Н</u>ет заливки</div>
<div class="a" style="left:365px;top:295px;width:187px;height:1px;background:#EBEBEB"></div>
<svg class="a" style="left:369px;top:301px" width="17" height="17" viewBox="0 0 17 17"><path d="M8.5 8.5L8.5 0.5A8 8 0 0 1 16.5 8.5z" fill="#E6C9A8"/><path d="M8.5 8.5L16.5 8.5A8 8 0 0 1 10 16.4z" fill="#8FAFC2"/><path d="M8.5 8.5L10 16.4A8 8 0 0 1 1.5 12.5z" fill="#6F97B0"/><path d="M8.5 8.5L1.5 12.5A8 8 0 0 1 0.8 6z" fill="#B96C55"/><path d="M8.5 8.5L0.8 6A8 8 0 0 1 8.5 0.5z" fill="#D9B9A5"/></svg>
<div class="t" style="left:399px;top:304px;font-size:12.6px;color:#777">Дру<u>г</u>ие цвета...</div>
<svg class="a" style="left:505px;top:156px" width="16" height="24" viewBox="0 0 16 24"><path d="M1 1v18.5l4.2-3.6 3 6.1 2.6-1.2-3-5.9h5.8z" fill="#fff" stroke="#3A3A3A" stroke-width="1.2" stroke-linejoin="round"/></svg>
</body></html>
